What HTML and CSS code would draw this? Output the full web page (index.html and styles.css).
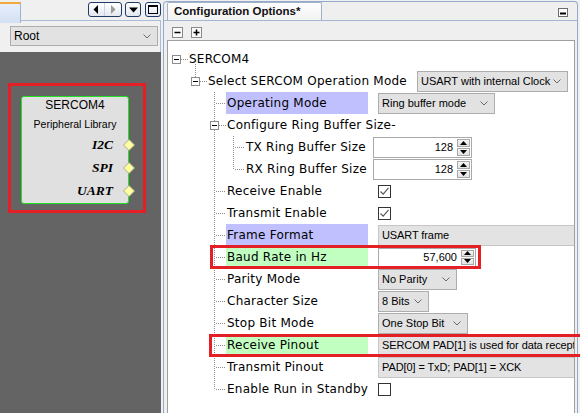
FILE: index.html
```html
<!DOCTYPE html>
<html>
<head>
<meta charset="utf-8">
<link rel="stylesheet" href="styles.css">
</head>
<body>
<div class="app">
  <section class="left">
    <div class="lhead">
      <div class="ltab"></div>
      <div class="lrest">
        <span class="btn pair">
          <svg width="6" height="9" viewBox="0 0 6 9"><path d="M5 0V9L0.5 4.5Z" fill="#000"/></svg>
          <span class="div"></span>
          <svg width="6" height="9" viewBox="0 0 6 9"><path d="M1 0V9L5.5 4.5Z" fill="#9a9a9a"/></svg>
        </span>
        <span class="btn"><svg width="9" height="6" viewBox="0 0 9 6"><path d="M0 0.5H9L4.5 5.5Z" fill="#000"/></svg></span>
        <span class="btn"><svg width="10" height="9" viewBox="0 0 10 9"><rect x="0.5" y="0.5" width="9" height="8" fill="none" stroke="#000"/><path d="M0 1.5H10" stroke="#000"/></svg></span>
      </div>
    </div>
    <div class="lbar">
      <div class="combo root"><span>Root</span><svg width="8" height="5" viewBox="0 0 8 5"><path d="M0.5 0.5L4 4L7.5 0.5" fill="none" stroke="#6a6a6a"/></svg></div>
    </div>
    <div class="canvas">
      <div class="node">
        <div class="ntitle">SERCOM4</div>
        <div class="nsub">Peripheral Library</div>
        <div class="port"><span>I2C</span><svg width="12" height="12" viewBox="0 0 12 12"><path d="M6 0.5L11.5 6L6 11.5L0.5 6Z" fill="#ffffa0" stroke="#a8a890"/></svg></div>
        <div class="port"><span>SPI</span><svg width="12" height="12" viewBox="0 0 12 12"><path d="M6 0.5L11.5 6L6 11.5L0.5 6Z" fill="#ffffa0" stroke="#a8a890"/></svg></div>
        <div class="port"><span>UART</span><svg width="12" height="12" viewBox="0 0 12 12"><path d="M6 0.5L11.5 6L6 11.5L0.5 6Z" fill="#ffffa0" stroke="#a8a890"/></svg></div>
      </div>
      <div class="mark mark-node"></div>
    </div>
  </section>
  <div class="sep"></div>
  <section class="right">
    <div class="rhead">
      <div class="rtab">Configuration Options*</div>
      <svg class="minbtn" width="10" height="9" viewBox="0 0 10 9"><rect x="0.5" y="0.5" width="9" height="8" fill="#fff" stroke="#6c6c6c"/><path d="M2 5.5H8" stroke="#000" stroke-width="2"/></svg>
    </div>
    <div class="rtool">
      <svg width="11" height="11" viewBox="0 0 11 11"><rect x="0.5" y="0.5" width="10" height="10" fill="#fafafa" stroke="#8a8a8a"/><path d="M2.5 5.5H8.5" stroke="#000" stroke-width="1.5"/></svg>
      <svg width="11" height="11" viewBox="0 0 11 11"><rect x="0.5" y="0.5" width="10" height="10" fill="#fafafa" stroke="#8a8a8a"/><path d="M2.5 5.5H8.5M5.5 2.5V8.5" stroke="#000" stroke-width="1.5"/></svg>
    </div>
    <div class="tree">
      <div class="row r0">
        <span class="g c hd"><svg width="9" height="9" viewBox="0 0 9 9"><rect x="0.5" y="0.5" width="8" height="8" fill="#fff" stroke="#8c8c8c"/><path d="M2 4.5H7" stroke="#000"/></svg></span>
        <span class="lbl">SERCOM4</span>
      </div>
      <div class="row">
        <span class="g"></span>
        <span class="g c hd up"><svg width="9" height="9" viewBox="0 0 9 9"><rect x="0.5" y="0.5" width="8" height="8" fill="#fff" stroke="#8c8c8c"/><path d="M2 4.5H7" stroke="#000"/></svg></span>
        <span class="lbl w1">Select SERCOM Operation Mode</span>
        <span class="combo cw-sel"><span>USART with internal Clock</span><svg width="8" height="5" viewBox="0 0 8 5"><path d="M0.5 0.5L4 4L7.5 0.5" fill="none" stroke="#6a6a6a"/></svg></span>
      </div>
      <div class="row">
        <span class="g"></span><span class="g"></span>
        <span class="g c tee"></span>
        <span class="lbl w2 hb">Operating Mode</span>
        <span class="combo cw-op"><span>Ring buffer mode</span><svg width="8" height="5" viewBox="0 0 8 5"><path d="M0.5 0.5L4 4L7.5 0.5" fill="none" stroke="#6a6a6a"/></svg></span>
      </div>
      <div class="row">
        <span class="g"></span><span class="g"></span>
        <span class="g c hd up dn"><svg width="9" height="9" viewBox="0 0 9 9"><rect x="0.5" y="0.5" width="8" height="8" fill="#fff" stroke="#8c8c8c"/><path d="M2 4.5H7" stroke="#000"/></svg></span>
        <span class="lbl">Configure Ring Buffer Size-</span>
      </div>
      <div class="row">
        <span class="g"></span><span class="g"></span><span class="g pipe"></span>
        <span class="g c tee"></span>
        <span class="lbl w3">TX Ring Buffer Size</span>
        <span class="spin sp-ring"><span class="num">128</span><span class="arrows"><span class="ab"><svg width="7" height="4" viewBox="0 0 7 4"><path d="M0 4L3.5 0L7 4Z"/></svg></span><span class="ab"><svg width="7" height="4" viewBox="0 0 7 4"><path d="M0 0L3.5 4L7 0Z"/></svg></span></span></span>
      </div>
      <div class="row">
        <span class="g"></span><span class="g"></span><span class="g pipe"></span>
        <span class="g c end"></span>
        <span class="lbl w3">RX Ring Buffer Size</span>
        <span class="spin sp-ring"><span class="num">128</span><span class="arrows"><span class="ab"><svg width="7" height="4" viewBox="0 0 7 4"><path d="M0 4L3.5 0L7 4Z"/></svg></span><span class="ab"><svg width="7" height="4" viewBox="0 0 7 4"><path d="M0 0L3.5 4L7 0Z"/></svg></span></span></span>
      </div>
      <div class="row">
        <span class="g"></span><span class="g"></span>
        <span class="g c tee"></span>
        <span class="lbl w2">Receive Enable</span>
        <span class="chk"><svg width="11" height="11" viewBox="0 0 11 11"><path d="M1.5 5.5L4.2 8.2L9.5 1.8" fill="none" stroke="#5a5a5a" stroke-width="1.2"/></svg></span>
      </div>
      <div class="row">
        <span class="g"></span><span class="g"></span>
        <span class="g c tee"></span>
        <span class="lbl w2">Transmit Enable</span>
        <span class="chk"><svg width="11" height="11" viewBox="0 0 11 11"><path d="M1.5 5.5L4.2 8.2L9.5 1.8" fill="none" stroke="#5a5a5a" stroke-width="1.2"/></svg></span>
      </div>
      <div class="row">
        <span class="g"></span><span class="g"></span>
        <span class="g c tee"></span>
        <span class="lbl w2 hb">Frame Format</span>
        <span class="field">USART frame</span>
      </div>
      <div class="row">
        <span class="g"></span><span class="g"></span>
        <span class="g c tee"></span>
        <span class="lbl w2 hg">Baud Rate in Hz</span>
        <span class="spin sp-baud"><span class="num">57,600</span><span class="arrows"><span class="ab"><svg width="7" height="4" viewBox="0 0 7 4"><path d="M0 4L3.5 0L7 4Z"/></svg></span><span class="ab"><svg width="7" height="4" viewBox="0 0 7 4"><path d="M0 0L3.5 4L7 0Z"/></svg></span></span></span>
      </div>
      <div class="row">
        <span class="g"></span><span class="g"></span>
        <span class="g c tee"></span>
        <span class="lbl w2">Parity Mode</span>
        <span class="combo cw-par"><span>No Parity</span><svg width="8" height="5" viewBox="0 0 8 5"><path d="M0.5 0.5L4 4L7.5 0.5" fill="none" stroke="#6a6a6a"/></svg></span>
      </div>
      <div class="row">
        <span class="g"></span><span class="g"></span>
        <span class="g c tee"></span>
        <span class="lbl w2">Character Size</span>
        <span class="combo cw-cs"><span>8 Bits</span><svg width="8" height="5" viewBox="0 0 8 5"><path d="M0.5 0.5L4 4L7.5 0.5" fill="none" stroke="#6a6a6a"/></svg></span>
      </div>
      <div class="row">
        <span class="g"></span><span class="g"></span>
        <span class="g c tee"></span>
        <span class="lbl w2">Stop Bit Mode</span>
        <span class="combo cw-sb"><span>One Stop Bit</span><svg width="8" height="5" viewBox="0 0 8 5"><path d="M0.5 0.5L4 4L7.5 0.5" fill="none" stroke="#6a6a6a"/></svg></span>
      </div>
      <div class="row">
        <span class="g"></span><span class="g"></span>
        <span class="g c tee"></span>
        <span class="lbl w2 hg">Receive Pinout</span>
        <span class="field">SERCOM PAD[1] is used for data reception</span>
      </div>
      <div class="row">
        <span class="g"></span><span class="g"></span>
        <span class="g c tee"></span>
        <span class="lbl w2">Transmit Pinout</span>
        <span class="field">PAD[0] = TxD; PAD[1] = XCK</span>
      </div>
      <div class="row">
        <span class="g"></span><span class="g"></span>
        <span class="g c end"></span>
        <span class="lbl w2">Enable Run in Standby</span>
        <span class="chk"></span>
      </div>
    </div>
  </section>
  <div class="mark mark-baud"></div>
  <div class="mark mark-rx"></div>
</div>
</body>
</html>
```

FILE: styles.css
```css
* { box-sizing: border-box; margin: 0; padding: 0; }
html, body { width: 580px; height: 413px; overflow: hidden; }
body {
  background: #f0f0f0;
  font-family: "Liberation Sans", Arial, sans-serif;
  font-size: 11px;
  color: #000;
}
svg { display: block; }

.app {
  position: relative;
  display: flex;
  width: 580px;
  height: 413px;
  overflow: hidden;
  --dot: #8e8e8e;
  --v: repeating-linear-gradient(180deg, var(--dot) 0 1px, transparent 1px 2px);
  --h: repeating-linear-gradient(90deg, var(--dot) 0 1px, transparent 1px 2px);
}

/* ---------- left panel ---------- */
.left {
  width: 161px;
  flex-shrink: 0;
  display: flex;
  flex-direction: column;
}
.lhead {
  height: 21px;
  display: flex;
  align-items: flex-start;
}
.ltab {
  width: 21px;
  height: 21px;
  margin-top: 2px;
  border-top: 2px solid #f2a93b;
  border-right: 1px solid #9db3d2;
  background: linear-gradient(#e7effb, #d3e0f3);
}
.lrest {
  flex: 1;
  height: 21px;
  border-bottom: 1px solid #a9bdd6;
  display: flex;
  justify-content: flex-end;
  align-items: flex-start;
  padding-top: 2px;
  gap: 3px;
}
.btn {
  width: 16px;
  height: 15px;
  border: 1px solid #1f3b66;
  border-radius: 3px;
  background: linear-gradient(#ffffff, #e3e8ef);
  display: flex;
  align-items: center;
  justify-content: center;
}
.btn:last-child { margin-left: 1px; }
.btn.pair {
  width: 34px;
  justify-content: space-between;
  padding: 0 5px 0 4px;
}
.btn.pair .div {
  width: 1px;
  height: 13px;
  background: #c9d2de;
}
.lbar {
  height: 31px;
  border-right: 1px solid #a9bdd6;
  padding: 5px 2px 0 10px;
}
.combo {
  height: 21px;
  display: flex;
  align-items: center;
  justify-content: space-between;
  padding: 0 6px 0 3px;
  background: #e2e2e2;
  border: 1px solid #adadad;
  flex-shrink: 0;
  font-size: 11px;
  white-space: nowrap;
}
.combo.root {
  width: 148px;
  height: 20px;
  font-size: 12px;
  padding-left: 3px;
}
.canvas {
  flex: 1;
  position: relative;
  background: #646464;
}
.node {
  position: absolute;
  left: 21px;
  top: 44px;
  width: 108px;
  height: 108px;
  border: 1px solid #22e022;
  border-radius: 3px;
  background: #e0e0e0;
  display: flex;
  flex-direction: column;
  align-items: stretch;
}
.ntitle {
  text-align: center;
  font-size: 12px;
  line-height: 16px;
}
.nsub {
  text-align: center;
  font-size: 10.5px;
  line-height: 14px;
  margin-top: 4px;
  margin-bottom: 2px;
}
.port {
  display: flex;
  justify-content: flex-end;
  align-items: center;
  height: 23.5px;
  margin-right: -7px;
  font-family: "Liberation Serif", "Times New Roman", serif;
  font-weight: bold;
  font-style: italic;
  font-size: 13.5px;
}
.port svg { margin-left: 10px; }

.mark {
  position: absolute;
  border: 3px solid #e41f26;
}
.mark-node { left: 8px; top: 31px; width: 138px; height: 130px; }
.mark-baud { left: 210px; top: 245px; width: 271px; height: 24px; }
.mark-rx { left: 209px; top: 334px; width: 400px; height: 23px; }

.sep { width: 2px; flex-shrink: 0; }

/* ---------- right panel ---------- */
.right {
  width: 415px;
  flex-shrink: 0;
  margin-top: 1px;
  border: 1px solid #93aacb;
  border-bottom: none;
  border-radius: 4px 4px 0 0;
  background: #efefef;
  display: flex;
  flex-direction: column;
}
.rhead {
  height: 19px;
  display: flex;
  align-items: flex-start;
  padding-left: 3px;
  border-bottom: 1px solid #a4b7d1;
}
.rtab {
  width: 155px;
  height: 18px;
  border: 1px solid #a3b1c5;
  border-bottom: none;
  border-radius: 2px 2px 0 0;
  background: linear-gradient(#fefefe, #f2f2f2);
  font-weight: bold;
  font-size: 11.5px;
  line-height: 16px;
  padding-left: 6px;
  color: #111;
}
.minbtn { margin: 6px 9px 0 auto; }
.rtool {
  height: 19px;
  display: flex;
  align-items: flex-start;
  padding: 6px 0 0 8px;
  gap: 8px;
}
.tree {
  flex: 1;
  margin: 0 2px 0 3px;
  border: 1px solid #a0a0a0;
  border-bottom: none;
  background: #fff;
  padding-top: 7px;
  overflow: hidden;
}
.row {
  display: flex;
  align-items: center;
  height: 22px;
}
.row.r0 {
  background: var(--v) 27px 16px / 1px 6px no-repeat;
}
.g {
  width: 19px;
  height: 22px;
  flex-shrink: 0;
}
.g.c { width: 20px; }
.hd {
  display: flex;
  align-items: center;
  padding-left: 4px;
  background: var(--h) 13px 11px / 7px 1px no-repeat;
}
.hd.up {
  background: var(--v) 8px 0 / 1px 7px no-repeat, var(--h) 13px 11px / 7px 1px no-repeat;
}
.hd.up.dn {
  background: var(--v) 8px 0 / 1px 7px no-repeat, var(--v) 8px 16px / 1px 6px no-repeat, var(--h) 13px 11px / 7px 1px no-repeat;
}
.pipe { background: var(--v) 8px 0 / 1px 22px no-repeat; }
.tee {
  background: var(--v) 8px 0 / 1px 22px no-repeat, var(--h) 10px 11px / 10px 1px no-repeat;
}
.end {
  background: var(--v) 8px 0 / 1px 12px no-repeat, var(--h) 10px 11px / 10px 1px no-repeat;
}
.lbl {
  font-family: "DejaVu Sans", Verdana, sans-serif;
  font-size: 12px;
  letter-spacing: 0.25px;
  height: 22px;
  line-height: 22px;
  padding-left: 1px;
  white-space: nowrap;
  flex-shrink: 0;
}
.w1 { width: 200px; margin-right: 10px; }
.w2 { width: 142px; margin-right: 10px; }
.w3 { width: 118px; margin-right: 10px; }
.hb { background: #c0c0ff; }
.hg { background: #c0ffc0; }

.cw-sel { width: 151px; }
.cw-op { width: 117px; }
.cw-par { width: 79px; }
.cw-cs { width: 51px; }
.cw-sb { width: 90px; }

.spin {
  display: flex;
  flex-shrink: 0;
  background: #fff;
  border: 1px solid #a9a9a9;
  padding: 1px;
}
.sp-ring { width: 99px; height: 21px; }
.sp-baud { width: 98px; height: 19px; }
.num {
  flex: 1;
  text-align: right;
  padding-right: 4px;
  display: flex;
  align-items: center;
  justify-content: flex-end;
  font-size: 11px;
}
.arrows {
  width: 13px;
  display: flex;
  flex-direction: column;
  gap: 1px;
}
.ab {
  flex: 1;
  border: 1px solid #a8a8a8;
  background: linear-gradient(#f6f6f6, #e2e2e2);
  display: flex;
  align-items: center;
  justify-content: center;
}
.chk {
  width: 13px;
  height: 13px;
  border: 1px solid #333;
  background: #fff;
  display: flex;
  align-items: center;
  justify-content: center;
  flex-shrink: 0;
}
.field {
  width: 230px;
  height: 21px;
  flex-shrink: 0;
  background: #e3e3e3;
  border: 1px solid #c6c6c6;
  padding-left: 3px;
  display: flex;
  align-items: center;
  white-space: nowrap;
  font-size: 11px;
  letter-spacing: -0.1px;
}
```
